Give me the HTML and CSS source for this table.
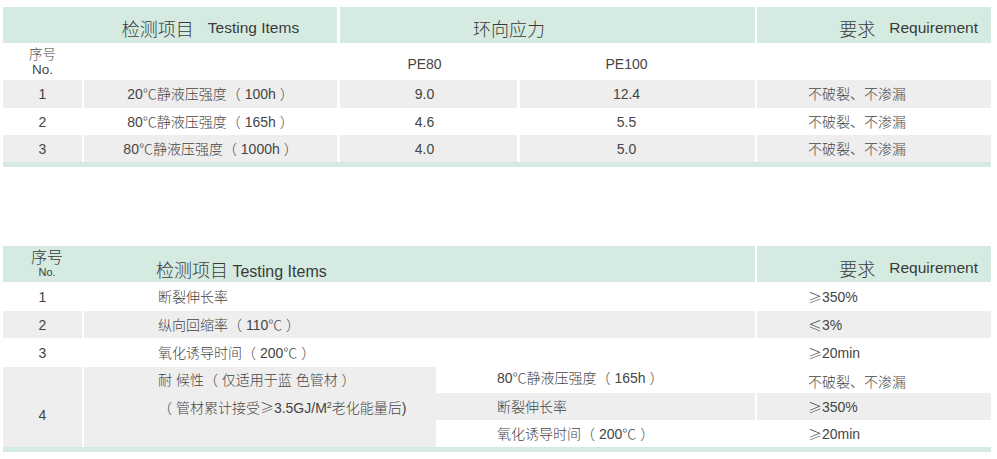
FILE: index.html
```html
<!DOCTYPE html>
<html lang="zh-CN">
<head>
<meta charset="utf-8">
<title>检测项目 Testing Items</title>
<link rel="stylesheet" href="styles.css">
</head>
<body>
<div class="page">
  <div class="tbl t1">
    <div class="c hd b3 span2 hd-item"><span class="zh hz">检测项目</span><span class="en">Testing Items</span></div>
    <div class="c hd b2 span2 hd-ring"><span class="zh hz">环向应力</span></div>
    <div class="c hd hd-req"><span class="zh hz">要求</span><span class="en">Requirement</span></div>

    <div class="c b2 sub no"><div class="no-txt">序号<br>No.</div></div>
    <div class="c b3 sub"></div>
    <div class="c b3 sub pe80">PE80</div>
    <div class="c b2 sub pe100">PE100</div>
    <div class="c sub"></div>

    <div class="c b2 g">1</div>
    <div class="c b3 g">20℃静液压强度（ 100h ）</div>
    <div class="c b3 g pe80">9.0</div>
    <div class="c b2 g pe100">12.4</div>
    <div class="c g req">不破裂、不渗漏</div>

    <div class="c b2">2</div>
    <div class="c b3">80℃静液压强度（ 165h ）</div>
    <div class="c b3 pe80">4.6</div>
    <div class="c b2 pe100">5.5</div>
    <div class="c req">不破裂、不渗漏</div>

    <div class="c b2 g">3</div>
    <div class="c b3 g">80℃静液压强度（ 1000h ）</div>
    <div class="c b3 g pe80">4.0</div>
    <div class="c b2 g pe100">5.0</div>
    <div class="c g req">不破裂、不渗漏</div>

    <div class="bar"></div>
  </div>

  <div class="tbl t2">
    <div class="c hd b2 span3 hd2">
      <div class="hd2-no">序号<br>No.</div>
      <div class="hd2-item"><span class="zh hz">检测项目</span> <span class="en2">Testing Items</span></div>
    </div>
    <div class="c hd hd-req hd2-req"><span class="zh hz">要求</span><span class="en">Requirement</span></div>

    <div class="c b2">1</div>
    <div class="c b2 span2 item">断裂伸长率</div>
    <div class="c req"><span class="zh">≥</span>350%</div>

    <div class="c b2 g">2</div>
    <div class="c b2 g span2 item">纵向回缩率（ 110℃ ）</div>
    <div class="c g req"><span class="zh">≤</span>3%</div>

    <div class="c b2">3</div>
    <div class="c b2 span2 item">氧化诱导时间（ 200℃ ）</div>
    <div class="c req"><span class="zh">≥</span>20min</div>

    <div class="c b2 g rows3 four">4</div>
    <div class="c g rows3 item item4">
      <span>耐 候性（ 仅适用于蓝 色管材 ）</span>
      <span>（ 管材累计接受<span class="zh">≥</span>3.5GJ/M<sup>2</sup>老化能量后)</span>
    </div>
    <div class="c b2 subitem sub1">80℃静液压强度（ 165h ）</div>
    <div class="c req sub1r">不破裂、不渗漏</div>
    <div class="c b2 g subitem">断裂伸长率</div>
    <div class="c g req"><span class="zh">≥</span>350%</div>
    <div class="c b2 subitem">氧化诱导时间（ 200℃ ）</div>
    <div class="c req"><span class="zh">≥</span>20min</div>

    <div class="bar"></div>
  </div>
</div>
</body>
</html>
```

FILE: styles.css
```css
body {
  margin: 0;
  background: #ffffff;
  font-family: "Liberation Sans", "Noto Sans CJK SC", sans-serif;
  font-size: 14px;
  font-weight: 300;
  color: #454545;
}

.page {
  padding: 7px 0 0 3px;
}

.tbl {
  display: grid;
  width: 988px;
}

.t1 {
  grid-template-columns: 81px 256px 180px 237px 234px;
  grid-template-rows: 36px 37px 28px 27px 27px 5px;
}

.t2 {
  margin-top: 79px;
  grid-template-columns: 81px 352px 321px 234px;
  grid-template-rows: 36px 29px 27px 29px 26px 27px 27px 5px;
}

.c {
  display: flex;
  align-items: center;
  justify-content: center;
  white-space: nowrap;
  line-height: 16px;
  min-width: 0;
}

.b2 { border-right: 2px solid #ffffff; }
.b3 { border-right: 3px solid #ffffff; }

.span2 { grid-column: span 2; }
.span3 { grid-column: span 3; }
.rows3 { grid-row: span 3; }

.g { background: #eeeeee; }

.hd {
  background: #d5ebe2;
  font-size: 15.5px;
  color: #3a3a3a;
  padding-top: 6px;
}

.zh {
  font-family: "Noto Sans CJK SC", sans-serif;
}

.hz {
  font-size: 18px;
  line-height: 18px;
}

.en { margin-left: 14px; }

.hd-item { padding-left: 81px; }

.hd-ring {
  justify-content: flex-start;
  padding-left: 133px;
}

.hd-req {
  justify-content: flex-end;
  padding-right: 13px;
}

.sub { padding-top: 4px; }

.no { padding-top: 2px; }

.no-txt {
  text-align: center;
  font-size: 13.5px;
  line-height: 14.5px;
}

.pe80 { padding-right: 8px; }
.pe100 { padding-right: 22px; }

.req {
  justify-content: flex-start;
  padding-left: 51px;
}

/* second table */
.hd2 {
  justify-content: flex-start;
  padding-top: 0;
}

.hd2-no {
  width: 88px;
  text-align: center;
  font-size: 11px;
  line-height: 15.5px;
  padding-top: 2px;
}

.hd2-no::first-line {
  font-size: 16px;
}

.hd2-item {
  margin-left: 65px;
  padding-top: 11px;
  font-size: 16px;
}

.hd2-req { padding-top: 8px; }

.item {
  justify-content: flex-start;
  padding-left: 74px;
}

.item4 {
  flex-direction: column;
  align-items: flex-start;
  line-height: 27px;
}

.item4 sup {
  font-size: 9px;
  line-height: 0;
  vertical-align: 5px;
}

.four { padding-top: 16px; }

.subitem {
  justify-content: flex-start;
  padding-left: 61px;
}

.sub1 { padding-bottom: 4px; }
.sub1r { padding-top: 4px; }

.bar {
  grid-column: 1 / -1;
  background: #d5ebe2;
}
```
